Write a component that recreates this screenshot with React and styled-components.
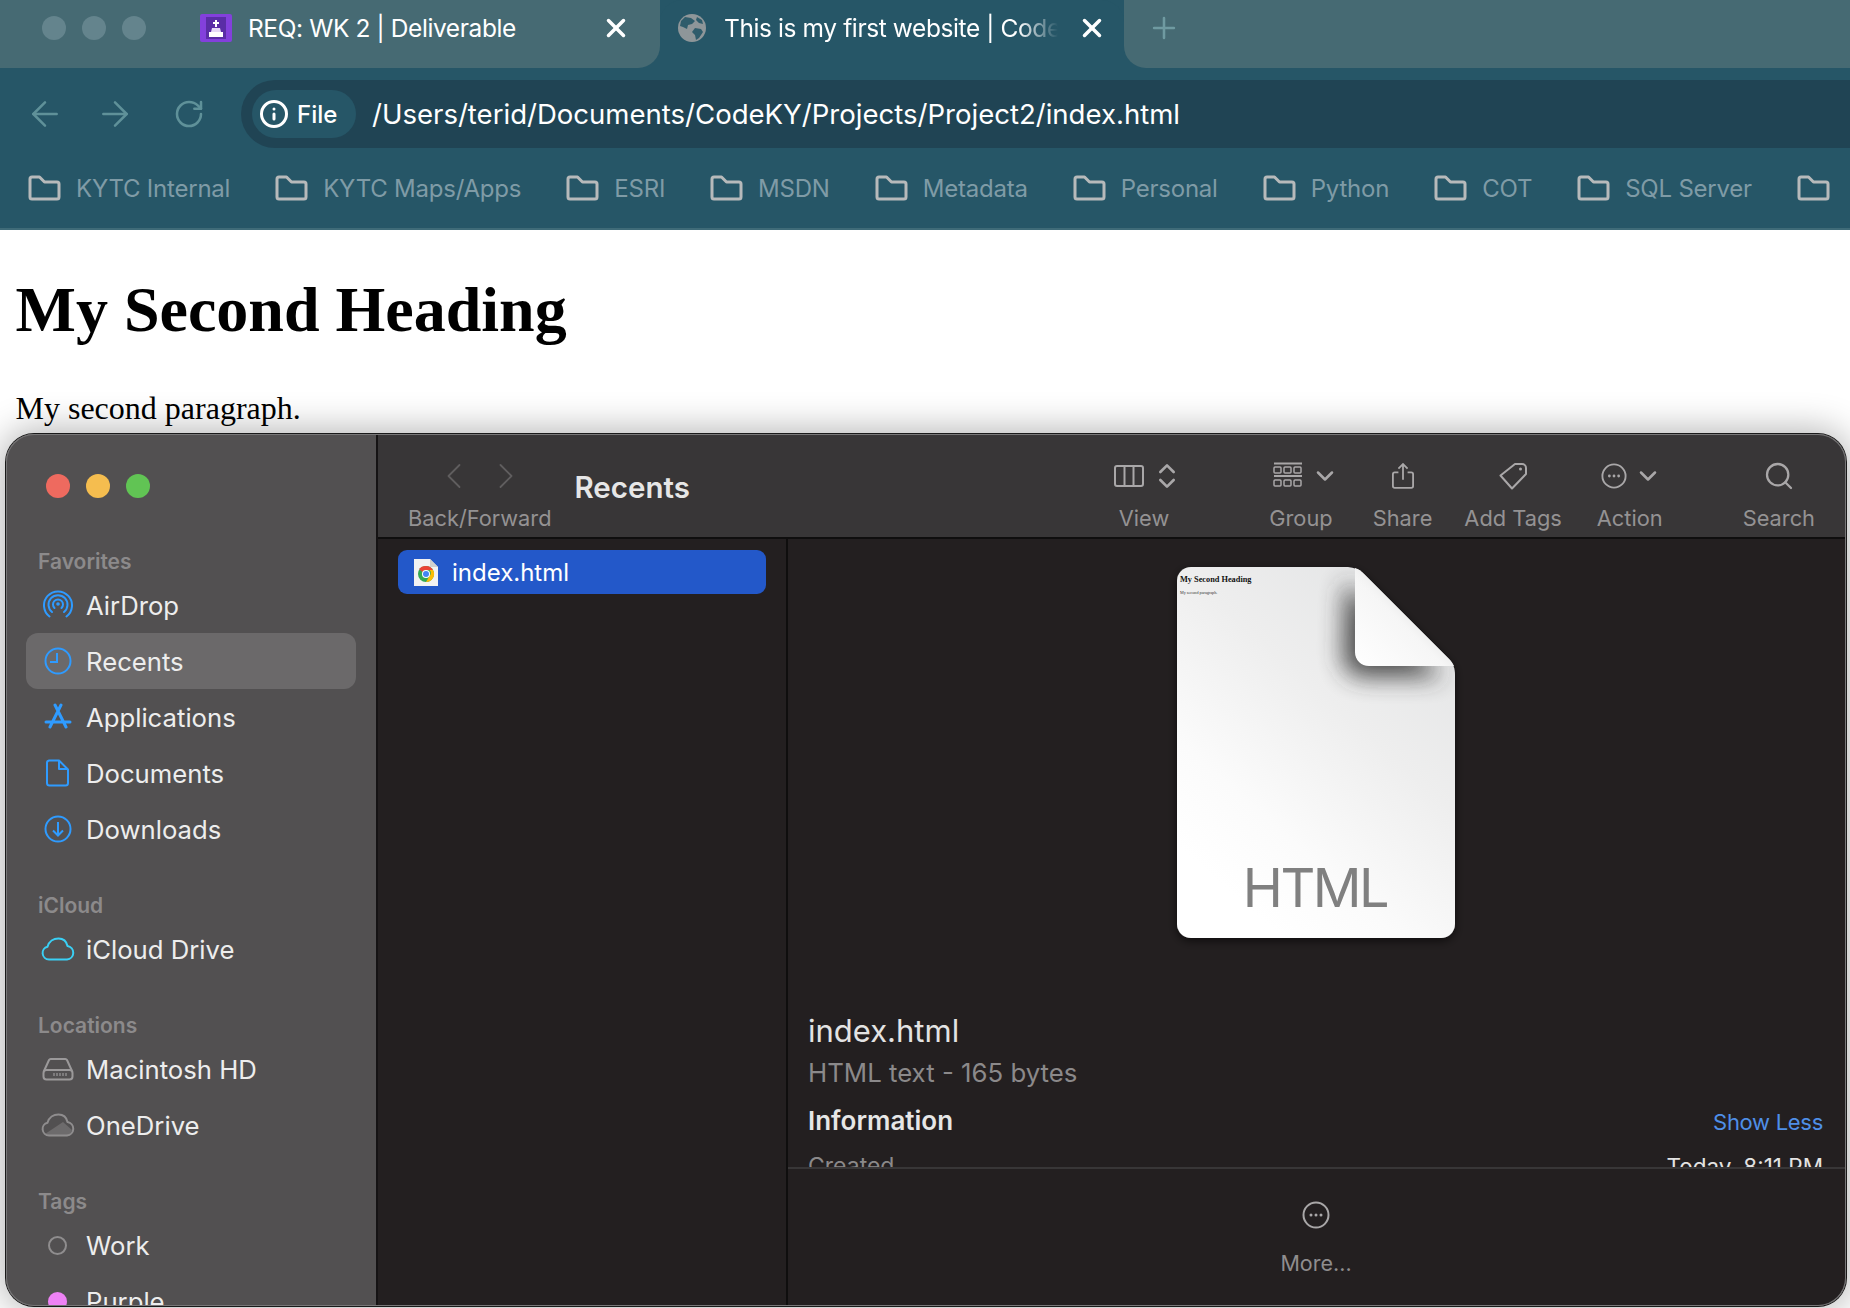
import styled, { createGlobalStyle, css } from 'styled-components'
import { ArrowLeft, ArrowRight, RotateCw, X, Plus, Info, ChevronLeft, ChevronRight, ChevronDown, ChevronsUpDown, Search } from 'lucide-react'

const GlobalStyle = createGlobalStyle`
  html, body {
    margin: 0;
    padding: 0;
    background: #ffffff;
  }
  * {
    box-sizing: border-box;
  }
`

const Screen = styled.div`
  position: relative;
  width: 1850px;
  height: 1308px;
  overflow: hidden;
  font-family: Inter, "Liberation Sans", sans-serif;
`

/* browser chrome */
const Chrome = styled.header`
  background: #265667;
  border-bottom: 2px solid #3f6b78;
`

const TabStrip = styled.div`
  display: flex;
  height: 68px;
  background: #265667;
`

const StripPart = styled.div`
  display: flex;
  align-items: center;
  background: #466a73;
  height: 68px;
  flex: ${p => (p.$grow ? '1' : '0 0 auto')};
  width: ${p => (p.$grow ? 'auto' : '660px')};
  padding-left: ${p => p.$left}px;
  padding-bottom: 12px;
  border-bottom-left-radius: ${p => (p.$grow ? 22 : 0)}px;
  border-bottom-right-radius: ${p => (p.$grow ? 0 : 22)}px;
`

const WindowDots = styled.div`
  display: flex;
  gap: 16px;
  margin-right: 54px;
`

const WindowDot = styled.span`
  width: 24px;
  height: 24px;
  border-radius: 50%;
  background: #64848d;
`

const TabTitle = styled.span`
  color: #ffffff;
  font-size: 24.5px;
  letter-spacing: -0.4px;
  white-space: nowrap;
  overflow: hidden;
  width: ${p => p.$width}px;
  margin-left: ${p => p.$left}px;
  ${p => p.$fade && 'mask-image: linear-gradient(to right, #000 88%, transparent 100%);'}
`

const ActiveTab = styled.div`
  display: flex;
  align-items: center;
  width: 464px;
  height: 68px;
  padding: 0 0 12px 18px;
  background: #265667;
  border-radius: 22px 22px 0 0;
`

const CloseIcon = styled(X)`
  color: #ffffff;
  margin-left: ${p => p.$left}px;
  flex: none;
`

const NewTabIcon = styled(Plus)`
  color: #6f9aa1;
`

const AddressRow = styled.div`
  display: flex;
  align-items: center;
  height: 68px;
  margin-top: 12px;
  padding-left: 30px;
`

const NavButton = styled.span`
  display: flex;
  width: 30px;
  justify-content: center;
  margin-right: ${p => p.$right}px;
  color: #5f9199;

  svg {
    flex: none;
  }
`

const UrlBar = styled.div`
  flex: 1;
  display: flex;
  align-items: center;
  height: 68px;
  padding-left: 11px;
  background: #204454;
  border-radius: 34px 0 0 34px;
`

const FileChip = styled.div`
  display: flex;
  align-items: center;
  gap: 8px;
  width: 104px;
  height: 48px;
  padding-left: 7px;
  border-radius: 24px;
  background: #265667;
  color: #ffffff;
  font-size: 24px;
  font-weight: 500;
`

const UrlText = styled.span`
  margin-left: 16px;
  color: #ffffff;
  font-size: 27.55px;
`

const Bookmarks = styled.div`
  display: flex;
  align-items: center;
  height: 80px;
  padding-left: 28px;
  white-space: nowrap;
  overflow: hidden;
`

const Bookmark = styled.div`
  display: flex;
  align-items: center;
  flex: none;
  gap: 15px;
  margin-right: 45px;
  color: #7f9ba6;
  font-size: 24px;
  letter-spacing: -0.22px;
`

/* page behind the window */
const PageBody = styled.main`
  padding: 0 15.5px;
  color: #000000;
  font-family: "Liberation Serif", serif;
`

const Heading = styled.h1`
  margin: 43px 0 0;
  font-size: 64px;
  line-height: 74px;
  font-weight: bold;
`

const Paragraph = styled.p`
  margin: 43px 0 0;
  font-size: 32px;
  line-height: 37px;
`

/* finder window, all three layers share one frame */
const windowFrame = css`
  position: absolute;
  left: 6px;
  top: 434px;
  width: 1840px;
  height: 872px;
  border-radius: 28px;
`

const FinderWindow = styled.section`
  ${windowFrame}
  display: flex;
  overflow: hidden;
  background: #231f20;
`

const WindowShadow = styled.div`
  ${windowFrame}
  box-shadow: 0 0 0 1px #1a1a1a, 0 0 36px 4px rgba(0, 0, 0, 0.3);
`

const WindowEdge = styled.div`
  ${windowFrame}
  pointer-events: none;
  box-shadow: inset 0 0 0 1px #787778;
`

const Sidebar = styled.aside`
  flex: none;
  width: 372px;
  padding: 0 20px 0 20px;
  background: #525051;
  border-right: 2px solid #151314;
  overflow: hidden;
`

const TrafficLights = styled.div`
  display: flex;
  gap: 16px;
  height: 109px;
  padding: 40px 0 0 20px;
`

const TrafficLight = styled.span`
  width: 24px;
  height: 24px;
  border-radius: 50%;
  background: ${p => p.$color};
`

const SideSection = styled.div`
  margin-bottom: 30px;
`

const SideLabel = styled.div`
  height: 34px;
  padding-left: 12px;
  line-height: 38px;
  color: #8c8a8b;
  font-size: 21px;
  font-weight: 600;
`

const SideRow = styled.div`
  display: flex;
  align-items: center;
  height: 56px;
  border-radius: 12px;
  background: ${p => (p.$active ? '#6b696a' : 'transparent')};
  color: #ededed;
  font-size: 25.7px;
`

const SideIcon = styled.span`
  flex: none;
  display: flex;
  justify-content: center;
  width: 60px;
  padding-left: 3px;
`

const TagDot = styled.span`
  display: block;
  width: 19px;
  height: 19px;
  border-radius: 50%;
  border: ${p => (p.$fill ? 'none' : '2px solid #8f8d8e')};
  background: ${p => p.$fill || 'transparent'};
`

const FinderMain = styled.div`
  flex: 1;
  display: flex;
  flex-direction: column;
  min-width: 0;
`

const Toolbar = styled.div`
  flex: none;
  display: flex;
  height: 105px;
  padding: 22px 31px 0 30px;
  background: #383637;
  border-bottom: 2px solid #0f0e0e;
`

const ToolItem = styled.div`
  display: flex;
  flex-direction: column;
  align-items: center;
  margin-left: ${p => p.$left || 0}px;
  ${p => p.$push && 'margin-left: auto;'}
`

/* negative side margins: the label alone sets the width of a tool */
const ToolIcons = styled.div`
  display: flex;
  align-items: center;
  justify-content: center;
  height: 40px;
  margin: 0 -50px;
  padding-left: ${p => p.$nudge || 0}px;
  gap: ${p => p.$gap || 0}px;
  color: ${p => (p.$dim ? '#5f5d5e' : '#a9a7a8')};

  svg {
    flex: none;
  }
`

const ToolLabel = styled.span`
  margin-top: 7px;
  line-height: 30px;
  color: #949293;
  font-size: 21.8px;
  white-space: nowrap;
`

const FolderTitle = styled.h2`
  margin: 13px 0 0 23px;
  color: #e6e6e6;
  font-size: 29.5px;
  font-weight: 600;
  line-height: 36px;
`

const Panes = styled.div`
  flex: 1;
  display: flex;
  min-height: 0;
`

const FileList = styled.div`
  flex: none;
  width: 410px;
  padding: 11px 20px 0 20px;
  border-right: 2px solid #0f0e0e;
`

const FileRow = styled.div`
  display: flex;
  align-items: center;
  gap: 14px;
  height: 44px;
  padding-left: 16px;
  border-radius: 9px;
  background: #2358c9;
  color: #ffffff;
  font-size: 24px;
`

const Preview = styled.div`
  flex: 1;
  display: flex;
  flex-direction: column;
  min-width: 0;
`

const PreviewScroll = styled.div`
  flex: 1;
  min-height: 0;
  overflow: hidden;
  padding: 28px 23px 0 20px;
`

const DocWrap = styled.div`
  display: flex;
  justify-content: center;
  margin-bottom: 73px;
`

const FileName = styled.div`
  color: #e3e3e3;
  font-size: 31px;
  line-height: 40px;
`

const FileKind = styled.div`
  margin-top: 2px;
  color: #8b898a;
  font-size: 25.8px;
  line-height: 40px;
`

const InfoRow = styled.div`
  display: flex;
  align-items: center;
  justify-content: space-between;
  height: ${p => p.$height}px;
  margin-top: ${p => p.$top}px;
`

const InfoTitle = styled.span`
  color: #e6e6e6;
  font-size: 26px;
  font-weight: 600;
`

const ShowLess = styled.span`
  margin-top: 4px;
  color: #4f8fe8;
  font-size: 22px;
  letter-spacing: -0.3px;
`

const MetaKey = styled.span`
  color: #8b898a;
  font-size: 23px;
`

const MetaValue = styled.span`
  color: #e3e3e3;
  font-size: 22.5px;
`

const MoreBar = styled.div`
  flex: none;
  display: flex;
  flex-direction: column;
  align-items: center;
  height: 139px;
  padding: 26px 2px 0 0;
  border-top: 2px solid #383637;
`

const MoreLabel = styled.span`
  margin-top: 15px;
  color: #8f8d8e;
  font-size: 21.5px;
`

/* drawings */
const FolderIcon = () => (
  <svg width="33" height="26" viewBox="0 0 33 26" fill="none" stroke="#b7babb" strokeWidth="3" strokeLinejoin="round">
    <path d="M2 4a2 2 0 0 1 2-2h7.5l5 5H29a2 2 0 0 1 2 2v13a2 2 0 0 1-2 2H4a2 2 0 0 1-2-2z" />
  </svg>
)

const ClassroomIcon = () => (
  <svg width="32" height="28" viewBox="0 0 32 28">
    <rect width="32" height="28" rx="2" fill="#8340dc" />
    <rect x="6" y="3" width="20" height="22" fill="#5a2da6" />
    <path d="M15 6h2v2h2v2h-2v3h-2v-3h-2V8h2z" fill="#fff" />
    <path d="M12 14h8l1 4h-10z" fill="#e6d9f7" />
    <rect x="9" y="18" width="14" height="5" fill="#fff" />
  </svg>
)

const GlobeIcon = () => (
  <svg width="28" height="28" viewBox="0 0 28 28">
    <circle cx="14" cy="14" r="14" fill="#8e9699" />
    <path d="M7 3l6 1 4 3-3 3-4 1-1 4-4-2-3-1 1-5zM17 14l6 1 2 3-4 6-3 2-1-5-3-3zM19 3l5 3 1 4-4-1-3-3z" fill="#2f5c6b" />
  </svg>
)

const AirDropIcon = () => (
  <svg width="30" height="30" viewBox="0 0 30 30" fill="none" stroke="#2f9bff" strokeWidth="2" strokeLinecap="round">
    <path d="M6.5 26.5a14 14 0 1 1 17 0" />
    <path d="M9 22a9.500 9.500 0 1 1 12 0" />
    <path d="M11.500 18a5 5 0 1 1 7 0" />
    <circle cx="15" cy="14" r="1.800" fill="#2f9bff" stroke="none" />
  </svg>
)

const RecentsIcon = () => (
  <svg width="28" height="28" viewBox="0 0 28 28" fill="none" stroke="#2f9bff" strokeWidth="2">
    <circle cx="14" cy="14" r="12.500" />
    <path d="M13 6v9H6" />
  </svg>
)

const AppsIcon = () => (
  <svg width="28" height="28" viewBox="0 0 28 28" fill="none" stroke="#2f9bff" strokeWidth="3" strokeLinecap="round">
    <path d="M11 2l11 22M17 2L6 24M2 19h24" />
  </svg>
)

const DocumentIcon = () => (
  <svg width="24" height="28" viewBox="0 0 24 28" fill="none" stroke="#2f9bff" strokeWidth="2" strokeLinejoin="round">
    <path d="M3 1.500h10l9 9V24a2.500 2.500 0 0 1-2.500 2.500h-16A2.500 2.500 0 0 1 1 24V4a2.500 2.500 0 0 1 2-2.500zM13 1.500V10h9" />
  </svg>
)

const DownloadIcon = () => (
  <svg width="28" height="28" viewBox="0 0 28 28" fill="none" stroke="#2f9bff" strokeWidth="2">
    <circle cx="14" cy="14" r="12.500" />
    <path d="M14 7v13M9 15.500l5 5 5-5" />
  </svg>
)

const CloudIcon = ({ color, filled }) => (
  <svg width="34" height="24" viewBox="0 0 34 24" fill="none" stroke={color} strokeWidth="2" strokeLinejoin="round">
    {filled && <path d="M4 21L22 9l9 8-2 5H7z" fill="#6d6b6c" stroke="none" />}
    <path d="M8 22.500a6.500 6.500 0 0 1-1.500-12.800C8 4.500 12.500 1.500 17.500 1.500c4.500 0 8 3 9 7.500a6.800 6.800 0 0 1-.5 13.500z" />
  </svg>
)

const DriveIcon = () => (
  <svg width="32" height="24" viewBox="0 0 32 24" fill="none" stroke="#9b999a" strokeWidth="2">
    <path d="M2 14L7 3a2 2 0 0 1 2-1h14a2 2 0 0 1 2 1l5 11" />
    <rect x="1.500" y="13" width="29" height="9.500" rx="3" />
    <path d="M12 16v3M15 16v3M18 16v3M21 16v3M24 16v3" strokeWidth="1.200" />
  </svg>
)

const ChromeFileIcon = () => (
  <svg width="24" height="27" viewBox="0 0 24 27">
    <path d="M0 0h16l8 8v19H0z" fill="#f2f2f2" />
    <path d="M16 0v8h8z" fill="#cfcfcf" />
    <circle cx="12" cy="15" r="8" fill="#34a853" />
    <path d="M12 7a8 8 0 0 1 7 4H12a4 4 0 0 0-3.500 2L5 10a8 8 0 0 1 7-3z" fill="#ea4335" />
    <path d="M19 11a8 8 0 0 1-7 12l3.500-6a4 4 0 0 0 0-6z" fill="#fbbc05" />
    <circle cx="12" cy="15" r="4" fill="#fff" />
    <circle cx="12" cy="15" r="3" fill="#4285f4" />
  </svg>
)

const ColumnsIcon = () => (
  <svg width="30" height="24" viewBox="0 0 30 24" fill="none" stroke="currentColor" strokeWidth="2">
    <rect x="1" y="2" width="28" height="20" rx="2" />
    <path d="M10.500 2v20M19.500 2v20" />
  </svg>
)

const GroupIcon = () => (
  <svg width="30" height="28" viewBox="0 0 30 28" fill="none" stroke="currentColor" strokeWidth="1.500">
    <path d="M1 1.500h28M1 14h28" strokeWidth="2" />
    {[1, 11, 21].map(x => (
      <g key={x}>
        <rect x={x} y="5" width="7" height="6" rx="1" />
        <rect x={x} y="18" width="7" height="6" rx="1" />
      </g>
    ))}
  </svg>
)

const ShareIcon = () => (
  <svg width="22" height="28" viewBox="0 0 24 30" fill="none" stroke="currentColor" strokeWidth="2">
    <path d="M7 11H3a2 2 0 0 0-2 2v13a2 2 0 0 0 2 2h18a2 2 0 0 0 2-2V13a2 2 0 0 0-2-2h-4" />
    <path d="M12 19V2M7 7l5-5 5 5" />
  </svg>
)

const TagIcon = () => (
  <svg width="30" height="30" viewBox="0 0 30 30" fill="none" stroke="currentColor" strokeWidth="2" strokeLinejoin="round">
    <path d="M17 3h7a4 4 0 0 1 4 4v6L14 27.500 2.500 14.500z" />
    <circle cx="22.500" cy="8" r="1.500" fill="currentColor" stroke="none" />
  </svg>
)

const MoreIcon = ({ size }) => (
  <svg width={size} height={size} viewBox="0 0 28 28" fill="none" stroke="currentColor" strokeWidth="2">
    <circle cx="14" cy="14" r="12.500" />
    <circle cx="9" cy="14" r="1.500" fill="currentColor" stroke="none" />
    <circle cx="14" cy="14" r="1.500" fill="currentColor" stroke="none" />
    <circle cx="19" cy="14" r="1.500" fill="currentColor" stroke="none" />
  </svg>
)

const DOC_BODY = 'M14 0H168C176 0 182 2 187 7L272 92C276 96 278 102 278 108V357A14 14 0 0 1 264 371H14A14 14 0 0 1 0 357V14A14 14 0 0 1 14 0Z'
const DOC_FOLD = 'M178 1C182 2 184 4 187 7L272 92C274 94 276 97 277 99H192C184 99 178 93 178 85Z'

const DocIcon = () => (
  <svg width="278" height="371" viewBox="0 0 278 371" style={{ overflow: 'visible' }}>
    <defs>
      <linearGradient id="sheet" x1="0.9" y1="0.05" x2="0.3" y2="0.95">
        <stop offset="0" stopColor="#e3e4e5" />
        <stop offset="0.42" stopColor="#eeeeee" />
        <stop offset="0.78" stopColor="#fbfbfb" />
        <stop offset="1" stopColor="#ffffff" />
      </linearGradient>
      <linearGradient id="fold" x1="0" y1="1" x2="0.75" y2="0.25">
        <stop offset="0" stopColor="#ffffff" />
        <stop offset="0.6" stopColor="#f6f6f6" />
        <stop offset="1" stopColor="#dcdcdc" />
      </linearGradient>
      <filter id="foldBlur" x="-50%" y="-50%" width="200%" height="200%">
        <feGaussianBlur stdDeviation="12" />
      </filter>
      <filter id="docShadow" x="-10%" y="-10%" width="120%" height="120%">
        <feDropShadow dx="0" dy="3" stdDeviation="5" floodColor="#000" floodOpacity="0.6" />
      </filter>
      <clipPath id="docClip">
        <path d={DOC_BODY} />
      </clipPath>
    </defs>
    <path d={DOC_BODY} fill="url(#sheet)" filter="url(#docShadow)" />
    <g clipPath="url(#docClip)">
      <path d="M176 4L274 100H196C184 100 174 92 174 82Z" transform="translate(-8 10)" fill="#333" filter="url(#foldBlur)" opacity="0.85" />
    </g>
    <path d={DOC_FOLD} fill="url(#fold)" />
    <text x="3" y="15" fontFamily="'Liberation Serif', serif" fontWeight="bold" fontSize="8.300" fill="#111">My Second Heading</text>
    <text x="3" y="27" fontFamily="'Liberation Serif', serif" fontSize="4.200" fill="#333">My second paragraph.</text>
    <text x="138" y="340" textAnchor="middle" fontFamily="Inter, sans-serif" fontSize="54" letterSpacing="-2.500" fill="#808080">HTML</text>
  </svg>
)

const bookmarks = ['KYTC Internal', 'KYTC Maps/Apps', 'ESRI', 'MSDN', 'Metadata', 'Personal', 'Python', 'COT', 'SQL Server', '']

const sections = [
  {
    label: 'Favorites',
    rows: [
      { name: 'AirDrop', icon: <AirDropIcon /> },
      { name: 'Recents', icon: <RecentsIcon />, active: true },
      { name: 'Applications', icon: <AppsIcon /> },
      { name: 'Documents', icon: <DocumentIcon /> },
      { name: 'Downloads', icon: <DownloadIcon /> },
    ],
  },
  { label: 'iCloud', rows: [{ name: 'iCloud Drive', icon: <CloudIcon color="#3ad0f5" /> }] },
  {
    label: 'Locations',
    rows: [
      { name: 'Macintosh HD', icon: <DriveIcon /> },
      { name: 'OneDrive', icon: <CloudIcon color="#8f8d8e" filled /> },
    ],
  },
  {
    label: 'Tags',
    rows: [
      { name: 'Work', icon: <TagDot /> },
      { name: 'Purple', icon: <TagDot $fill="#ee82f5" /> },
    ],
  },
]

const App = () => {
  return (
    <Screen>
      <GlobalStyle />
      <Chrome>
        <TabStrip>
          <StripPart $left={42}>
            <WindowDots>
              <WindowDot />
              <WindowDot />
              <WindowDot />
            </WindowDots>
            <ClassroomIcon />
            <TabTitle $left={16} $width={320}>REQ: WK 2 | Deliverable</TabTitle>
            <CloseIcon size={30} strokeWidth={2.800} $left={33} />
          </StripPart>
          <ActiveTab>
            <GlobeIcon />
            <TabTitle $left={18} $width={334} $fade>This is my first website | CodeKY</TabTitle>
            <CloseIcon size={30} strokeWidth={2.800} $left={19} />
          </ActiveTab>
          <StripPart $grow $left={23}>
            <NewTabIcon size={34} strokeWidth={1.800} />
          </StripPart>
        </TabStrip>
        <AddressRow>
          <NavButton $right={40}><ArrowLeft size={40} strokeWidth={1.500} /></NavButton>
          <NavButton $right={44}><ArrowRight size={40} strokeWidth={1.500} /></NavButton>
          <NavButton $right={37}><RotateCw size={32} strokeWidth={1.900} /></NavButton>
          <UrlBar>
            <FileChip>
              <Info size={30} strokeWidth={2.400} />
              File
            </FileChip>
            <UrlText>/Users/terid/Documents/CodeKY/Projects/Project2/index.html</UrlText>
          </UrlBar>
        </AddressRow>
        <Bookmarks>
          {bookmarks.map(name => (
            <Bookmark key={name}>
              <FolderIcon />
              {name}
            </Bookmark>
          ))}
        </Bookmarks>
      </Chrome>

      <PageBody>
        <Heading>My Second Heading</Heading>
        <Paragraph>My second paragraph.</Paragraph>
      </PageBody>

      <WindowShadow />
      <FinderWindow>
        <Sidebar>
          <TrafficLights>
            <TrafficLight $color="#ee6a5f" />
            <TrafficLight $color="#f5bd4f" />
            <TrafficLight $color="#61c454" />
          </TrafficLights>
          {sections.map(section => (
            <SideSection key={section.label}>
              <SideLabel>{section.label}</SideLabel>
              {section.rows.map(row => (
                <SideRow key={row.name} $active={row.active}>
                  <SideIcon>{row.icon}</SideIcon>
                  {row.name}
                </SideRow>
              ))}
            </SideSection>
          ))}
        </Sidebar>

        <FinderMain>
          <Toolbar>
            <ToolItem>
              <ToolIcons $dim $gap={8}>
                <ChevronLeft size={44} strokeWidth={1} />
                <ChevronRight size={44} strokeWidth={1} />
              </ToolIcons>
              <ToolLabel>Back/Forward</ToolLabel>
            </ToolItem>
            <FolderTitle>Recents</FolderTitle>
            <ToolItem $push>
              <ToolIcons $gap={7} $nudge={8}>
                <ColumnsIcon />
                <ChevronsUpDown size={32} strokeWidth={2} />
              </ToolIcons>
              <ToolLabel>View</ToolLabel>
            </ToolItem>
            <ToolItem $left={100}>
              <ToolIcons $gap={8} $nudge={10}>
                <GroupIcon />
                <ChevronDown size={28} strokeWidth={2.200} />
              </ToolIcons>
              <ToolLabel>Group</ToolLabel>
            </ToolItem>
            <ToolItem $left={40}>
              <ToolIcons><ShareIcon /></ToolIcons>
              <ToolLabel>Share</ToolLabel>
            </ToolItem>
            <ToolItem $left={32}>
              <ToolIcons><TagIcon /></ToolIcons>
              <ToolLabel>Add Tags</ToolLabel>
            </ToolItem>
            <ToolItem $left={35}>
              <ToolIcons $gap={7} $nudge={4}>
                <MoreIcon size={26} />
                <ChevronDown size={28} strokeWidth={2.200} />
              </ToolIcons>
              <ToolLabel>Action</ToolLabel>
            </ToolItem>
            <ToolItem $left={80}>
              <ToolIcons><Search size={32} strokeWidth={1.700} /></ToolIcons>
              <ToolLabel>Search</ToolLabel>
            </ToolItem>
          </Toolbar>
          <Panes>
            <FileList>
              <FileRow>
                <ChromeFileIcon />
                index.html
              </FileRow>
            </FileList>
            <Preview>
              <PreviewScroll>
                <DocWrap>
                  <DocIcon />
                </DocWrap>
                <FileName>index.html</FileName>
                <FileKind>HTML text - 165 bytes</FileKind>
                <InfoRow $top={7} $height={40}>
                  <InfoTitle>Information</InfoTitle>
                  <ShowLess>Show Less</ShowLess>
                </InfoRow>
                <InfoRow $top={6} $height={40}>
                  <MetaKey>Created</MetaKey>
                  <MetaValue>Today, 8:11 PM</MetaValue>
                </InfoRow>
              </PreviewScroll>
              <MoreBar>
                <ToolIcons><MoreIcon size={28} /></ToolIcons>
                <MoreLabel>More...</MoreLabel>
              </MoreBar>
            </Preview>
          </Panes>
        </FinderMain>
      </FinderWindow>
      <WindowEdge />
    </Screen>
  )
}

export default App
